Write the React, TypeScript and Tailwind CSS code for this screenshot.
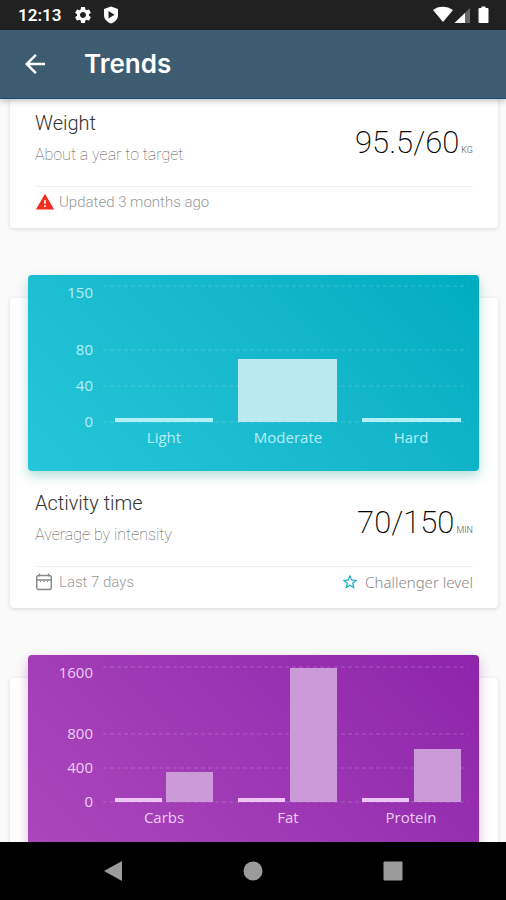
import type { ReactNode } from "react";
import { MdArrowBack, MdSettings, MdStarBorder, MdWarning } from "react-icons/md";

type Bar = { x: number; width: number; height: number; strong?: boolean };
type Tick = { label: string; line: number; text: number };
type ChartProps = {
  title: string;
  gradient: string;
  text: string;
  solid: string;
  soft: string;
  ticks: Tick[];
  bars: Bar[];
  labels: string[];
};

const BASE = 147;
const CENTERS = [136, 260, 383];

function Chart({ title, gradient, text, solid, soft, ticks, bars, labels }: ChartProps) {
  return (
    <div className={`relative z-10 mr-[19px] ml-[18px] -mt-[23px] rounded ${gradient}`}>
      <svg viewBox="0 0 451 196" className="block w-full" role="img" aria-label={title}>
        {ticks.map((t) => (
          <g key={t.label}>
            <line
              x1="75"
              x2="440"
              y1={t.line}
              y2={t.line}
              stroke="#fff"
              strokeOpacity="0.2"
              strokeWidth="1"
              strokeDasharray="4 3"
            />
            <text x="65" y={t.text} textAnchor="end" className={`text-[15px] ${text}`}>
              {t.label}
            </text>
          </g>
        ))}
        {bars.map((b) => (
          <rect
            key={b.x}
            x={b.x}
            y={BASE - b.height}
            width={b.width}
            height={b.height}
            className={b.strong ? solid : soft}
          />
        ))}
        {labels.map((l, i) => (
          <text key={l} x={CENTERS[i]} y="168" textAnchor="middle" className={`text-[15px] ${text}`}>
            {l}
          </text>
        ))}
      </svg>
    </div>
  );
}

type SummaryProps = {
  title: string;
  subtitle: string;
  value: string;
  unit: string;
  footer: ReactNode;
};

function Summary({ title, subtitle, value, unit, footer }: SummaryProps) {
  return (
    <div className="px-[25px] font-[Roboto,sans-serif] font-light">
      <div className="flex items-end justify-between">
        <div>
          <h2 className="text-[20px] leading-6 text-[#333]">{title}</h2>
          <p className="mt-2.5 text-[16px] leading-5 font-thin text-[#555]">{subtitle}</p>
        </div>
        <p className="flex items-baseline gap-0.5 text-[31px] leading-[44px] font-extralight text-black">
          {value}
          <span className="text-[9px] leading-3 font-light text-[#555]">{unit}</span>
        </p>
      </div>
      <div className="mt-[21px] flex h-[42px] items-start justify-between border-t border-[#eee] pt-[5px] text-[15px] leading-5 text-[#999]">
        {footer}
      </div>
    </div>
  );
}

const CARD = "rounded bg-white shadow-[0_1px_4px_rgba(0,0,0,0.14)]";

function StatusBar() {
  return (
    <div className="flex h-[30px] shrink-0 items-center justify-between bg-[#212121] pr-4 pl-[18px] text-white">
      <div className="flex items-center gap-2.5">
        <span className="mr-0.5 font-[Roboto,sans-serif] text-[17px] leading-6 font-semibold">12:13</span>
        <MdSettings size={20} />
        <svg width="16" height="18" viewBox="0 0 16 18">
          <path d="M8 .5 15 3v6c0 4.200-3 7.200-7 8.500C4 16.200 1 13.200 1 9V3z" fill="#fff" />
          <path d="M5.500 5v7.500L11.500 8.800z" fill="#212121" />
        </svg>
      </div>
      <svg width="58" height="18" viewBox="0 0 58 18">
        <path d="M1 4C6-.5 15-.5 21 4L11 16z" fill="#fff" />
        <path d="M38 2v15H22.500z" fill="#666" />
        <path d="M33 7V17H22.500z" fill="#fff" />
        <path d="M47.500 2h2V.5h4V2h2q1 0 1 1v13q0 1-1 1h-8q-1 0-1-1V3q0-1 1-1z" fill="#fff" />
      </svg>
    </div>
  );
}

function CalendarIcon() {
  return (
    <svg width="18" height="20" viewBox="0 0 18 20" fill="none" stroke="#888" strokeWidth="1.400">
      <rect x="1.700" y="3.500" width="14.600" height="14" rx="2" />
      <path d="M2 8h14M4.500 1.500v3M13.500 1.500v3" />
      <path d="M5 9.500h1M8.500 9.500h1M12 9.500h1" strokeWidth="1" />
    </svg>
  );
}

export default function App() {
  return (
    <div className="flex h-screen flex-col bg-[#fafafa] font-['Open_Sans',sans-serif]">
      <StatusBar />
      <header className="relative z-20 flex h-[69px] shrink-0 items-center gap-[34px] border-b border-[#174b6e] bg-[#3e5c71] pl-5 text-white shadow-[0_2px_6px_rgba(0,0,0,0.25)]">
        <button type="button" aria-label="Back">
          <MdArrowBack size={30} />
        </button>
        <h1 className="font-[Inter,sans-serif] text-[26px] leading-8 font-semibold">Trends</h1>
      </header>

      <main className="flex min-h-0 flex-1 flex-col gap-[70px] overflow-hidden pr-2 pl-2.5">
        <section className={`${CARD} shrink-0 pt-3`}>
          <Summary
            title="Weight"
            subtitle="About a year to target"
            value="95.5/60"
            unit="KG"
            footer={
              <span className="flex items-center gap-1">
                <MdWarning size={20} color="#f03020" />
                Updated 3 months ago
              </span>
            }
          />
        </section>

        <section className={`${CARD} shrink-0`}>
          <Chart
            title="Activity time"
            gradient="bg-linear-45 from-[#26c6da] to-[#00acc1] shadow-[0_5px_12px_rgba(0,150,136,0.3)]"
            text="fill-[#b4eff5]"
            solid="fill-[#b2f0f6]"
            soft="fill-[#baeaef]"
            ticks={[
              { label: "150", line: 11, text: 23 },
              { label: "80", line: 75, text: 80 },
              { label: "40", line: 111, text: 116 },
              { label: "0", line: 147, text: 152 },
            ]}
            bars={[
              { x: 87, width: 98, height: 4, strong: true },
              { x: 210, width: 99, height: 63 },
              { x: 334, width: 99, height: 4, strong: true },
            ]}
            labels={["Light", "Moderate", "Hard"]}
          />
          <div className="pt-5">
            <Summary
              title="Activity time"
              subtitle="Average by intensity"
              value="70/150"
              unit="MIN"
              footer={
                <>
                  <span className="flex items-center gap-1.5">
                    <CalendarIcon />
                    Last 7 days
                  </span>
                  <span className="flex items-center gap-1.5 font-['Noto_Sans',sans-serif] text-[15px] leading-5 text-[#888]">
                    <MdStarBorder size={18} color="#12aec2" />
                    Challenger level
                  </span>
                </>
              }
            />
          </div>
        </section>

        <section className={`${CARD} shrink-0`}>
          <Chart
            title="Nutrients"
            gradient="bg-linear-45 from-[#ab47bc] to-[#8e24aa] shadow-[0_5px_12px_rgba(120,30,150,0.3)]"
            text="fill-[#eccdf5]"
            solid="fill-[#f0c4fa]"
            soft="fill-[#cc9ad9]"
            ticks={[
              { label: "1600", line: 12, text: 23 },
              { label: "800", line: 79, text: 84 },
              { label: "400", line: 113, text: 118 },
              { label: "0", line: 147, text: 152 },
            ]}
            bars={[
              { x: 87, width: 47, height: 4, strong: true },
              { x: 138, width: 47, height: 30 },
              { x: 210, width: 47, height: 4, strong: true },
              { x: 262, width: 47, height: 134 },
              { x: 334, width: 47, height: 4, strong: true },
              { x: 386, width: 47, height: 53 },
            ]}
            labels={["Carbs", "Fat", "Protein"]}
          />
        </section>
      </main>

      <nav className="relative z-20 flex h-[58px] shrink-0 items-center justify-center gap-[120px] bg-black">
        <button type="button" aria-label="Back">
          <svg width="20" height="22" viewBox="0 0 20 22" fill="#9b9b9b">
            <path d="M19 1v20L1 11z" />
          </svg>
        </button>
        <button type="button" aria-label="Home">
          <svg width="20" height="20" viewBox="0 0 20 20" fill="#9b9b9b">
            <circle cx="10" cy="10" r="9.500" />
          </svg>
        </button>
        <button type="button" aria-label="Recent apps">
          <svg width="20" height="20" viewBox="0 0 20 20" fill="#9b9b9b">
            <rect x=".5" y=".5" width="19" height="19" rx="1" />
          </svg>
        </button>
      </nav>
    </div>
  );
}
